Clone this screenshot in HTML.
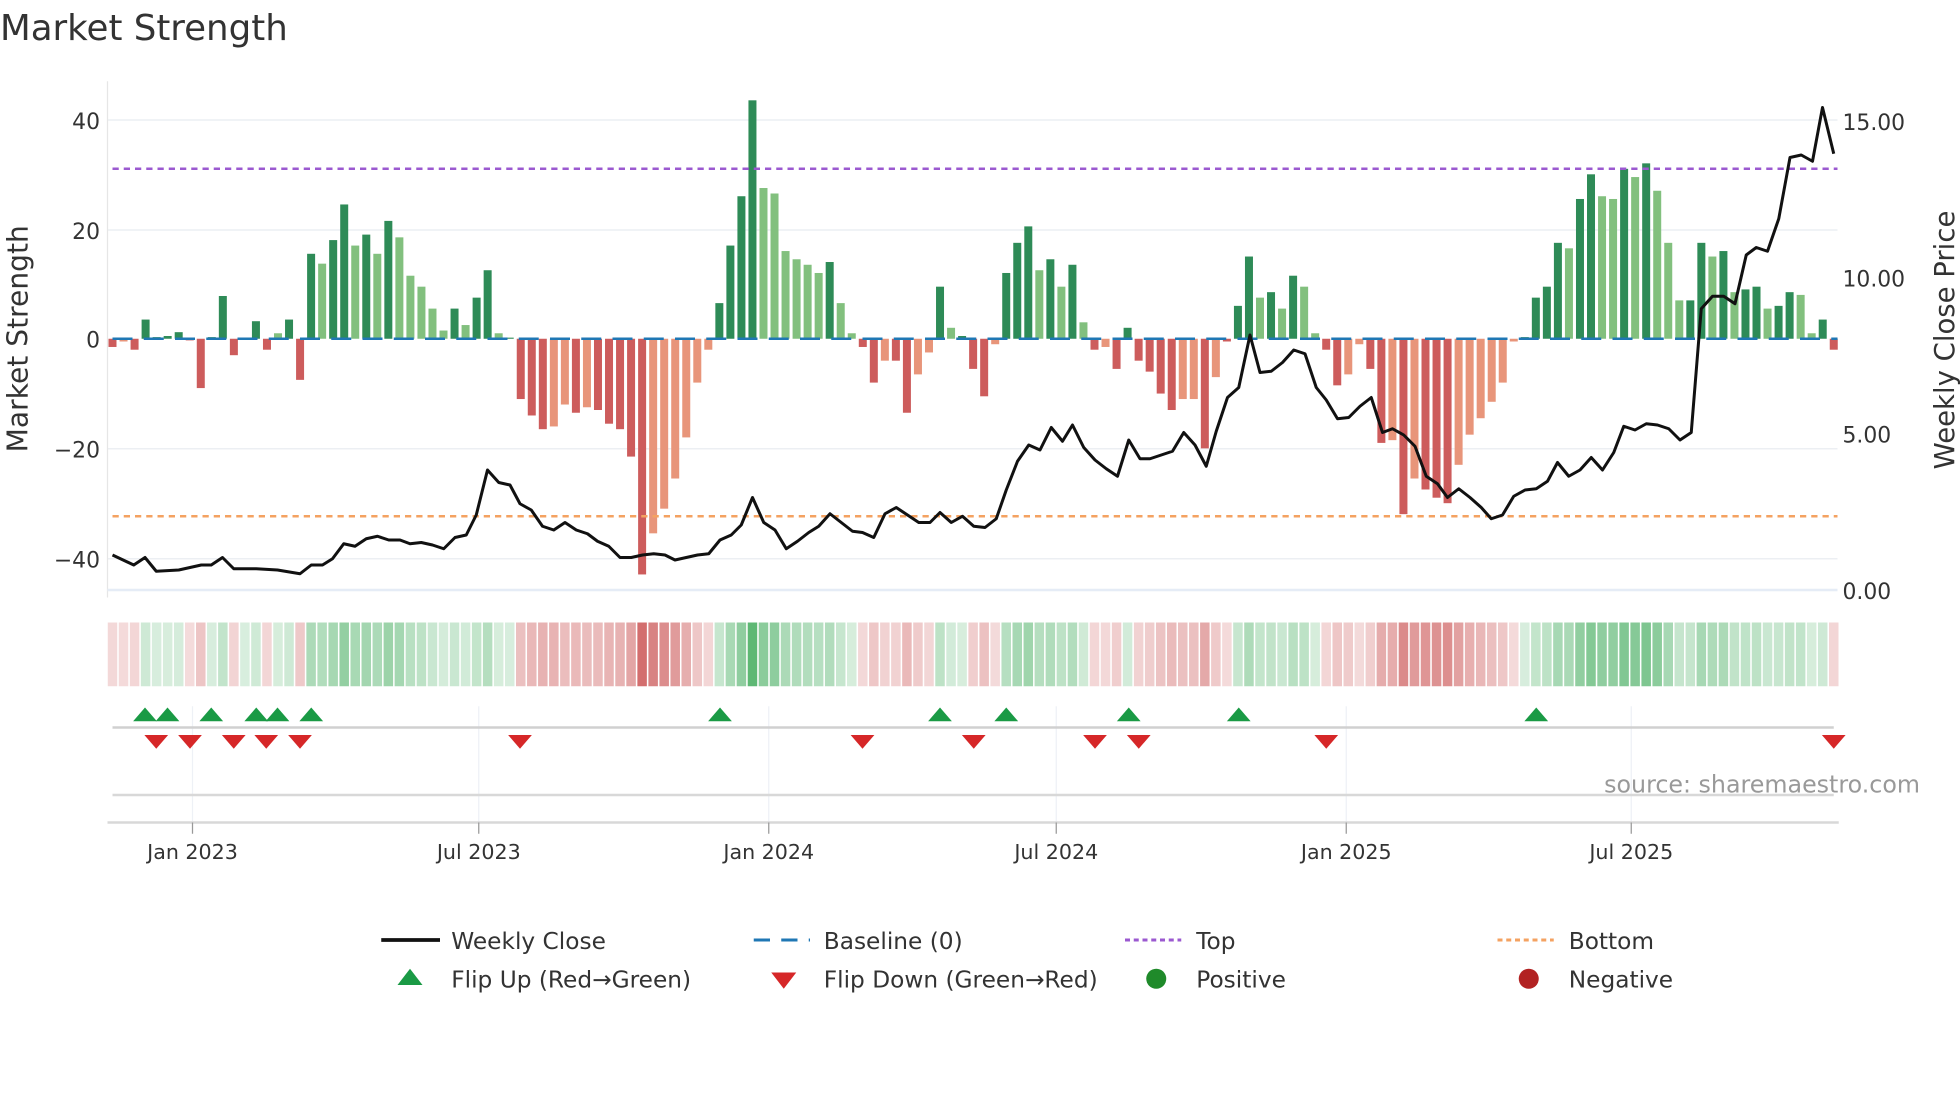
<!DOCTYPE html>
<html><head><meta charset="utf-8"><style>
html,body{margin:0;padding:0;background:#fff;width:1960px;height:1102px;overflow:hidden}
svg{display:block;font-family:"DejaVu Sans","Liberation Sans",sans-serif}
</style></head><body>
<svg id="s" width="1960" height="1102" viewBox="0 0 1568 881.6" xmlns="http://www.w3.org/2000/svg">
<text x="0" y="32" font-size="28.5" fill="#333">Market Strength</text>
<g stroke="#eceff3" stroke-width="1.2">
<line x1="86" x2="1470" y1="96" y2="96"/><line x1="86" x2="1470" y1="184" y2="184"/><line x1="86" x2="1470" y1="359" y2="359"/><line x1="86" x2="1470" y1="447" y2="447"/>
</g>
<line x1="86" x2="86" y1="65" y2="478" stroke="#e6e6e6" stroke-width="1"/>
<line x1="86" x2="1470" y1="472" y2="472" stroke="#e5ecf6" stroke-width="2"/>
<g font-size="17.5" fill="#333" text-anchor="end">
<text x="80" y="103">40</text><text x="80" y="191">20</text><text x="80" y="278">0</text><text x="80" y="366">−20</text><text x="80" y="454">−40</text>
</g>
<g font-size="17.5" fill="#333">
<text x="1474" y="104">15.00</text><text x="1474" y="229">10.00</text><text x="1474" y="354">5.00</text><text x="1474" y="479">0.00</text>
</g>
<text transform="translate(22,271) rotate(-90)" font-size="22.5" fill="#333" text-anchor="middle">Market Strength</text>
<text transform="translate(1563,272) rotate(-90)" font-size="22" fill="#333" text-anchor="middle">Weekly Close Price</text>
<g id="bars"></g>
<line x1="90" x2="1470" y1="271" y2="271" stroke="#1f77b4" stroke-width="2" stroke-dasharray="16,9"/>
<line x1="90" x2="1470" y1="135" y2="135" stroke="#9b59d0" stroke-width="2" stroke-dasharray="5,4"/>
<line x1="90" x2="1470" y1="413" y2="413" stroke="#f4a261" stroke-width="2" stroke-dasharray="5,4"/>
<polyline id="price" fill="none" stroke="#111" stroke-width="2.4" stroke-linejoin="round"/>
<g id="heat"></g>
<g stroke="#eef1f6" stroke-width="1">
<line x1="154" x2="154" y1="565" y2="658"/><line x1="383" x2="383" y1="565" y2="658"/><line x1="615" x2="615" y1="565" y2="658"/><line x1="845" x2="845" y1="565" y2="658"/><line x1="1077" x2="1077" y1="565" y2="658"/><line x1="1305" x2="1305" y1="565" y2="658"/>
</g>
<line x1="90" x2="1467" y1="582" y2="582" stroke="#d0d0d0" stroke-width="2"/>
<line x1="90" x2="1467" y1="636" y2="636" stroke="#d8d8d8" stroke-width="2"/>
<line x1="86" x2="1471" y1="658" y2="658" stroke="#d8d8d8" stroke-width="2"/>
<g id="marks"></g>
<g stroke="#999" stroke-width="1">
<line x1="154" x2="154" y1="658" y2="667"/><line x1="383" x2="383" y1="658" y2="667"/><line x1="615" x2="615" y1="658" y2="667"/><line x1="845" x2="845" y1="658" y2="667"/><line x1="1077" x2="1077" y1="658" y2="667"/><line x1="1305" x2="1305" y1="658" y2="667"/>
</g>
<g font-size="16.5" fill="#333" text-anchor="middle">
<text x="154" y="687">Jan 2023</text><text x="383" y="687">Jul 2023</text><text x="615" y="687">Jan 2024</text><text x="845" y="687">Jul 2024</text><text x="1077" y="687">Jan 2025</text><text x="1305" y="687">Jul 2025</text>
</g>
<text x="1536" y="634" font-size="19" fill="#999" text-anchor="end">source: sharemaestro.com</text>
<g font-size="18.6" fill="#333">
<line x1="305" x2="352" y1="752" y2="752" stroke="#111" stroke-width="3"/><text x="361" y="759">Weekly Close</text>
<line x1="603" x2="648" y1="752" y2="752" stroke="#1f77b4" stroke-width="2.4" stroke-dasharray="13,9"/><text x="659" y="759">Baseline (0)</text>
<line x1="900" x2="945" y1="752" y2="752" stroke="#9b59d0" stroke-width="2.4" stroke-dasharray="4,3"/><text x="957" y="759">Top</text>
<line x1="1198" x2="1243" y1="752" y2="752" stroke="#f4a261" stroke-width="2.4" stroke-dasharray="4,3"/><text x="1255" y="759">Bottom</text>
<polygon points="318,788 338,788 328,775" fill="#1a9a45"/><text x="361" y="790">Flip Up (Red→Green)</text>
<polygon points="617,778 637,778 627,791" fill="#d62728"/><text x="659" y="790">Flip Down (Green→Red)</text>
<circle cx="925" cy="783" r="8" fill="#1f8a2a"/><text x="957" y="790">Positive</text>
<circle cx="1223" cy="783" r="8" fill="#b22222"/><text x="1255" y="790">Negative</text>
</g>
</svg>
<script>
var V=[-1.5,-0.5,-2,3.5,0.3,0.5,1.2,-0.3,-9,0.3,7.8,-3,0,3.2,-2,1,3.5,-7.5,15.5,13.7,18,24.5,17,19,15.5,21.5,18.5,11.5,9.5,5.5,1.5,5.5,2.5,7.5,12.5,1,0.2,-11,-14,-16.5,-16,-12,-13.5,-12.5,-13,-15.5,-16.5,-21.5,-43,-35.5,-31,-25.5,-18,-8,-2,6.5,17,26,43.5,27.5,26.5,16,14.5,13.5,12,14,6.5,1,-1.5,-8,-4,-4,-13.5,-6.5,-2.5,9.5,2,0.5,-5.5,-10.5,-1,12,17.5,20.5,12.5,14.5,9.5,13.5,3,-2,-1.5,-5.5,2,-4,-6,-10,-13,-11,-11,-20,-7,-0.5,6,15,7.5,8.5,5.5,11.5,9.5,1,-2,-8.5,-6.5,-1,-5.5,-19,-18.5,-32,-25.5,-27.5,-29,-30,-23,-17.5,-14.5,-11.5,-8,-0.5,0.3,7.5,9.5,17.5,16.5,25.5,30,26,25.5,31,29.5,32,27,17.5,7,7,17.5,15,16,8.5,9,9.5,5.5,6,8.5,8,1,3.5,-2];
var L={1:1,19:1,22:1,24:1,26:1,27:1,28:1,29:1,30:1,32:1,35:1,40:1,41:1,43:1,49:1,50:1,51:1,52:1,53:1,54:1,59:1,60:1,61:1,62:1,63:1,64:1,66:1,67:1,70:1,73:1,74:1,76:1,80:1,84:1,86:1,88:1,90:1,97:1,98:1,100:1,104:1,106:1,108:1,109:1,112:1,113:1,116:1,118:1,122:1,123:1,124:1,125:1,126:1,127:1,132:1,135:1,136:1,138:1,140:1,141:1,142:1,145:1,147:1,150:1,153:1,154:1,15:1};
var P=[[90,444],[107,452],[116,446],[125,457],[143,456],[161,452],[169,452],[178,446],[187,455],[205,455],[222,456],[240,459],[249,452],[258,452],[266,447],[275,435],[284,437],[293,431],[302,429],[311,432],[320,432],[328,435],[337,434],[346,436],[355,439],[364,430],[373,428],[381,412],[390,376],[399,386],[408,388],[416,403],[425,408],[434,421],[443,424],[452,418],[461,424],[470,427],[478,433],[487,437],[496,446],[505,446],[514,444],[523,443],[532,444],[540,448],[549,446],[558,444],[567,443],[576,432],[585,428],[593,420],[602,398],[611,418],[620,424],[629,439],[638,433],[647,426],[655,421],[664,411],[673,418],[682,425],[690,426],[699,430],[708,411],[717,406],[726,412],[735,418],[744,418],[752,410],[761,418],[770,413],[779,421],[788,422],[797,415],[805,392],[814,369],[823,356],[832,360],[841,342],[850,353],[858,340],[867,358],[876,368],[885,375],[894,381],[903,352],[912,367],[920,367],[929,364],[938,361],[947,346],[956,356],[965,373],[973,345],[982,318],[991,310],[1000,268],[1008,298],[1017,297],[1026,290],[1035,280],[1044,283],[1053,310],[1061,320],[1070,335],[1079,334],[1088,325],[1097,318],[1106,346],[1114,343],[1123,348],[1132,357],[1141,381],[1150,387],[1158,398],[1167,391],[1176,398],[1185,406],[1193,415],[1202,412],[1211,397],[1220,392],[1229,391],[1238,385],[1246,370],[1255,381],[1264,376],[1273,366],[1282,376],[1291,362],[1299,341],[1308,344],[1317,339],[1326,340],[1335,343],[1344,352],[1353,346],[1361,247],[1370,237],[1379,237],[1388,243],[1397,204],[1405,198],[1414,201],[1423,175],[1432,126],[1441,124],[1450,129],[1458,86],[1467,123]];
var NS="http://www.w3.org/2000/svg";
function el(t,a,p){var e=document.createElementNS(NS,t);for(var k in a)e.setAttribute(k,a[k]);p.appendChild(e);return e;}
var bars=document.getElementById('bars'),heat=document.getElementById('heat');
var step=(1467-90)/156;
for(var i=0;i<V.length;i++){
 var v=V[i],x=90+i*step,h=Math.abs(v)*4.385,light=L[i];
 var c=v>=0?(light?'#82c07e':'#2e8b57'):(light?'#e8957a':'#cd5c5c');
 if(h>0.3) el('rect',{x:x-3.2,y:v>=0?271-h:271,width:6.4,height:h,fill:c},bars);
 var a=Math.min(0.85,0.18+Math.abs(v)/42*0.55);
 var hc=v>=0?'rgba(40,160,70,'+a+')':'rgba(195,60,60,'+a+')';
 el('rect',{x:x-3.8,y:498,width:7.6,height:51,fill:hc},heat);
}
document.getElementById('price').setAttribute('points',P.map(function(p){return p.join(',')}).join(' '));
var m=document.getElementById('marks');
[116,134,169,205,222,249,576,752,805,903,991,1229].forEach(function(x){el('polygon',{points:(x-9.5)+',577 '+(x+9.5)+',577 '+x+',566',fill:'#1a9a45'},m);});
[125,152,187,213,240,416,690,779,876,911,1061,1467].forEach(function(x){el('polygon',{points:(x-9.5)+',588 '+(x+9.5)+',588 '+x+',599',fill:'#d62728'},m);});
</script>
</body></html>
